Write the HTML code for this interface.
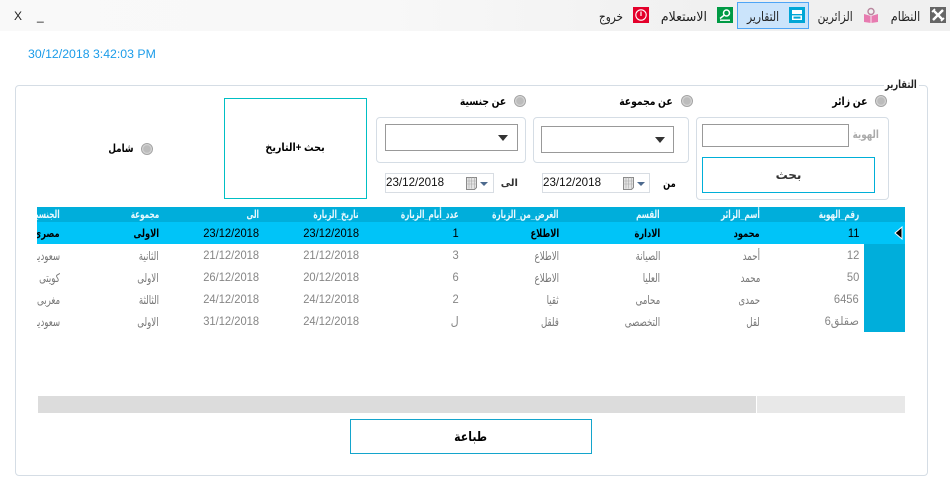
<!DOCTYPE html>
<html lang="ar">
<head>
<meta charset="utf-8">
<title>التقارير</title>
<style>
html,body{margin:0;padding:0;background:#fff}
body{position:relative;width:950px;height:501px;overflow:hidden;font-family:"Liberation Sans","DejaVu Sans",sans-serif;font-size:12px;color:#000}
.a{position:absolute;box-sizing:border-box}
.t{position:absolute;white-space:nowrap;line-height:16px;height:16px;transform-origin:right center;transform:scaleX(var(--s,1))}
.r{direction:rtl}
.b{font-weight:bold}
.box{position:absolute;box-sizing:border-box;border:1px solid #d5dde5;border-radius:4px;background:#fff}
.radio{position:absolute;box-sizing:border-box;width:12px;height:12px;border-radius:50%;border:1px solid #a4a4a4;background:radial-gradient(circle at 50% 50%,#bcbcbc 0 45%,#d8d8d8 65%,#f2f2f2 100%)}
.combo{position:absolute;box-sizing:border-box;border:1px solid #999;background:#fff}
.combo i{position:absolute;width:0;height:0;border-left:5px solid transparent;border-right:5px solid transparent;border-top:6px solid #333}
.date{position:absolute;box-sizing:border-box;height:20px;border:1px solid #d8dde3;background:#fff}
.date span{position:absolute;left:0;top:1px;line-height:16px;font-size:11.6px;color:#111}
.date svg{position:absolute;left:80px;top:2px}
.btn{position:absolute;box-sizing:border-box;background:#fff;text-align:center;direction:rtl;font-weight:bold}
.btn span{display:inline-block;transform:scaleX(var(--s,1))}
#g{position:absolute;left:37px;top:207px;width:868px;height:125px;overflow:hidden}
.row{position:absolute;left:0;width:868px;height:22px;line-height:22px;color:#777;font-size:12px}
.row span{position:absolute;white-space:nowrap;direction:rtl;top:1px;transform-origin:right center;transform:scaleX(.72)}
.row.sel{color:#000;font-weight:bold;font-size:11px}
.row.sel span{transform:scaleX(.75)}
.row.hd{color:#e8f8fd;font-size:11px;font-weight:bold}
.row.hd span{transform:scaleX(.66)}
.row span.n{font-size:12px;font-weight:normal;top:0;color:#868686;transform:scaleX(.93)}
.row.sel span.n{color:#000}
.c1{right:46px}.c2{right:145px}.c3{right:245px}.c4{right:346px}.c5{right:446px}.c6{right:546px}.c7{right:646px}.c8{right:746px}.c9{right:845px}
</style>
</head>
<body>

<!-- menu bar -->
<div class="a" style="left:0;top:0;width:950px;height:31px;background:linear-gradient(90deg,#f9f9f9 0,#f8f8f8 40%,#f0f0f0 75%,#f0f0f0 100%)"></div>
<div class="t" style="left:14px;top:8px;font-size:12px;color:#222">X</div>
<div class="t" style="left:37px;top:8px;font-size:12px;color:#111">_</div>

<div class="a" style="left:737px;top:2px;width:72px;height:27px;background:#cbe4fb;border:1px solid #4ea5f6"></div>

<svg class="a" style="left:930px;top:7px" width="16" height="16" viewBox="0 0 16 16"><rect width="16" height="16" fill="#666"/><path d="M3 3l10 10M13 3L3 13" stroke="#fff" stroke-width="2.4"/><path d="M2 5l3-3M11 14l3-3" stroke="#fff" stroke-width="1.6"/></svg>
<div class="t r" style="right:30px;top:9px;font-size:13px;color:#222;--s:.86">النظام</div>

<svg class="a" style="left:863px;top:7px" width="16" height="16" viewBox="0 0 16 16"><circle cx="8" cy="4.5" r="3" fill="none" stroke="#b8869e" stroke-width="1.4"/><path d="M1 7l7 2 7-2v8l-7 1-7-1z" fill="#e77bb0"/><path d="M8 9v7" stroke="#fff" stroke-width=".8"/></svg>
<div class="t r" style="right:97px;top:9px;font-size:13px;color:#222;--s:.82">الزائرين</div>

<svg class="a" style="left:789px;top:7px" width="16" height="16" viewBox="0 0 16 16"><rect width="16" height="16" fill="#00a6d6"/><rect x="3" y="3" width="10" height="10" fill="#fff"/><rect x="3" y="7" width="10" height="1.4" fill="#00a6d6"/><rect x="4.5" y="9.6" width="7" height="2" fill="#00a6d6"/></svg>
<div class="t r" style="right:171px;top:9px;font-size:13px;color:#222;--s:.82">التقارير</div>

<svg class="a" style="left:717px;top:7px" width="16" height="16" viewBox="0 0 16 16"><rect width="16" height="16" fill="#009a44"/><circle cx="9.5" cy="6" r="3" fill="none" stroke="#fff" stroke-width="1.5"/><path d="M7.2 8.2L3 11.5" stroke="#fff" stroke-width="1.5"/><rect x="3" y="12.5" width="10" height="1.4" fill="#fff"/></svg>
<div class="t r" style="right:243px;top:9px;font-size:13px;color:#222;--s:.96">الاستعلام</div>

<svg class="a" style="left:633px;top:7px" width="16" height="16" viewBox="0 0 16 16"><rect width="16" height="16" fill="#e4002b"/><circle cx="8" cy="8" r="5.2" fill="none" stroke="#fff" stroke-width="1.1"/><rect x="7.4" y="4.5" width="1.2" height="4.5" fill="#fff"/></svg>
<div class="t r" style="right:327px;top:9px;font-size:13px;color:#222;--s:.8">خروج</div>

<!-- timestamp -->
<div class="t" style="left:28px;top:46px;font-size:12.3px;color:#1b9ce9;transform:none">30/12/2018 3:42:03 PM</div>

<!-- panel -->
<div class="a" style="left:15px;top:85px;width:913px;height:391px;border:1px solid #d5dde5;border-radius:4px"></div>
<div class="a" style="left:884px;top:80px;width:35px;height:10px;background:#fff"></div>
<div class="t r b" style="right:33px;top:77px;font-size:11px;color:#222;--s:.76">التقارير</div>

<!-- radios -->
<div class="radio" style="left:875px;top:95px"></div>
<div class="t r b" style="right:82px;top:94px;font-size:11px;--s:.85">عن زائر</div>
<div class="radio" style="left:681px;top:95px"></div>
<div class="t r b" style="right:277px;top:94px;font-size:11px;--s:.84">عن مجموعة</div>
<div class="radio" style="left:514px;top:95px"></div>
<div class="t r b" style="right:444px;top:94px;font-size:11px;--s:.84">عن جنسية</div>
<div class="radio" style="left:141px;top:143px"></div>
<div class="t r b" style="right:816px;top:141px;font-size:11px;--s:.8">شامل</div>

<!-- box 1 -->
<div class="box" style="left:696px;top:117px;width:193px;height:83px"></div>
<div class="a" style="left:702px;top:124px;width:147px;height:23px;border:1px solid #999;background:#fff"></div>
<div class="t r b" style="right:71px;top:127px;font-size:11px;color:#aaa;--s:.8">الهوية</div>
<div class="btn" style="left:702px;top:157px;width:173px;height:36px;border:1px solid #00afd8;line-height:34px;font-size:12px;color:#333"><span>بحث</span></div>

<!-- box 2 -->
<div class="box" style="left:533px;top:117px;width:156px;height:46px"></div>
<div class="combo" style="left:541px;top:126px;width:133px;height:27px"><i style="left:113px;top:10px"></i></div>

<!-- box 3 -->
<div class="box" style="left:376px;top:117px;width:150px;height:46px"></div>
<div class="combo" style="left:385px;top:124px;width:133px;height:27px"><i style="left:112px;top:10px"></i></div>

<!-- dates -->
<div class="date" style="left:542px;top:173px;width:108px"><span>23/12/2018</span>
<svg width="25" height="15" viewBox="0 0 25 15"><path d="M.5 1.5h10v10l-2 2h-8z" fill="#e4e4e4" stroke="#8a8a8a"/><path d="M3 1.5v11M5.7 1.5v11M8.4 1.5v11M.5 5h10M.5 8h10" stroke="#aaa" stroke-width=".6"/><path d="M14 6h8l-4 4z" fill="#4d6a8e"/></svg></div>
<div class="t r b" style="right:274px;top:176px;font-size:11px;--s:.75">من</div>
<div class="date" style="left:385px;top:173px;width:109px"><span>23/12/2018</span>
<svg width="25" height="15" viewBox="0 0 25 15"><path d="M.5 1.5h10v10l-2 2h-8z" fill="#e4e4e4" stroke="#8a8a8a"/><path d="M3 1.5v11M5.7 1.5v11M8.4 1.5v11M.5 5h10M.5 8h10" stroke="#aaa" stroke-width=".6"/><path d="M14 6h8l-4 4z" fill="#4d6a8e"/></svg></div>
<div class="t r b" style="right:432px;top:176px;font-size:10px;color:#333">الى</div>

<!-- search + date -->
<div class="btn" style="left:224px;top:98px;width:143px;height:101px;border:1px solid #00bfc4;line-height:99px;font-size:11px"><span style="--s:.87">بحث +التاريخ</span></div>

<!-- grid -->
<div id="g">
  <div class="a" style="left:0;top:0;width:868px;height:15px;background:#00aedb"></div>
  <div class="a" style="left:0;top:15px;width:868px;height:22px;background:#00c4f8"></div>
  <div class="a" style="left:827px;top:37px;width:41px;height:88px;background:#00aedb"></div>

  <div class="row hd" style="top:-4px">
    <span class="c1">رقم_الهوية</span><span class="c2">أسم_الزائر</span><span class="c3">القسم</span><span class="c4">الغرض_من_الزيارة</span><span class="c5">عدد_أيام_الزيارة</span><span class="c6">تاريخ_الزيارة</span><span class="c7">الى</span><span class="c8">مجموعة</span><span class="c9">الجنسية</span>
  </div>

  <div class="row sel" style="top:15px">
    <span class="c1 n">11</span><span class="c2">محمود</span><span class="c3">الادارة</span><span class="c4">الاطلاع</span><span class="c5 n">1</span><span class="c6 n">23/12/2018</span><span class="c7 n">23/12/2018</span><span class="c8">الاولى</span><span class="c9">مصرى</span>
  </div>
  <div class="row" style="top:37px">
    <span class="c1 n">12</span><span class="c2">أحمد</span><span class="c3">الصيانة</span><span class="c4">الاطلاع</span><span class="c5 n">3</span><span class="c6 n">21/12/2018</span><span class="c7 n">21/12/2018</span><span class="c8">الثانية</span><span class="c9">سعودية</span>
  </div>
  <div class="row" style="top:59px">
    <span class="c1 n">50</span><span class="c2">محمد</span><span class="c3">العليا</span><span class="c4">الاطلاع</span><span class="c5 n">6</span><span class="c6 n">20/12/2018</span><span class="c7 n">26/12/2018</span><span class="c8">الاولى</span><span class="c9">كويتى</span>
  </div>
  <div class="row" style="top:81px">
    <span class="c1 n">6456</span><span class="c2">حمدى</span><span class="c3">محامى</span><span class="c4">ثقيا</span><span class="c5 n">2</span><span class="c6 n">24/12/2018</span><span class="c7 n">24/12/2018</span><span class="c8">الثالثة</span><span class="c9">مغربى</span>
  </div>
  <div class="row" style="top:103px">
    <span class="c1 n">صقلق6</span><span class="c2">لقل</span><span class="c3">التخصصى</span><span class="c4">قلقل</span><span class="c5 n">ل</span><span class="c6 n">24/12/2018</span><span class="c7 n">31/12/2018</span><span class="c8">الاولى</span><span class="c9">سعودية</span>
  </div>

  <svg class="a" style="left:857px;top:19px" width="10" height="14" viewBox="0 0 10 14"><path d="M8 1v12L1 7z" fill="#000" stroke="#fff" stroke-width="1"/></svg>
</div>

<!-- scrollbar -->
<div class="a" style="left:38px;top:396px;width:867px;height:17px;background:#e8e8e8"></div>
<div class="a" style="left:38px;top:396px;width:718px;height:17px;background:#dcdcdc"></div>
<div class="a" style="left:756px;top:396px;width:1px;height:17px;background:#fff"></div>

<!-- print -->
<div class="btn" style="left:350px;top:419px;width:242px;height:35px;border:1px solid #14a5cc;line-height:33px;font-size:13px"><span style="--s:.84">طباعة</span></div>

</body>
</html>
